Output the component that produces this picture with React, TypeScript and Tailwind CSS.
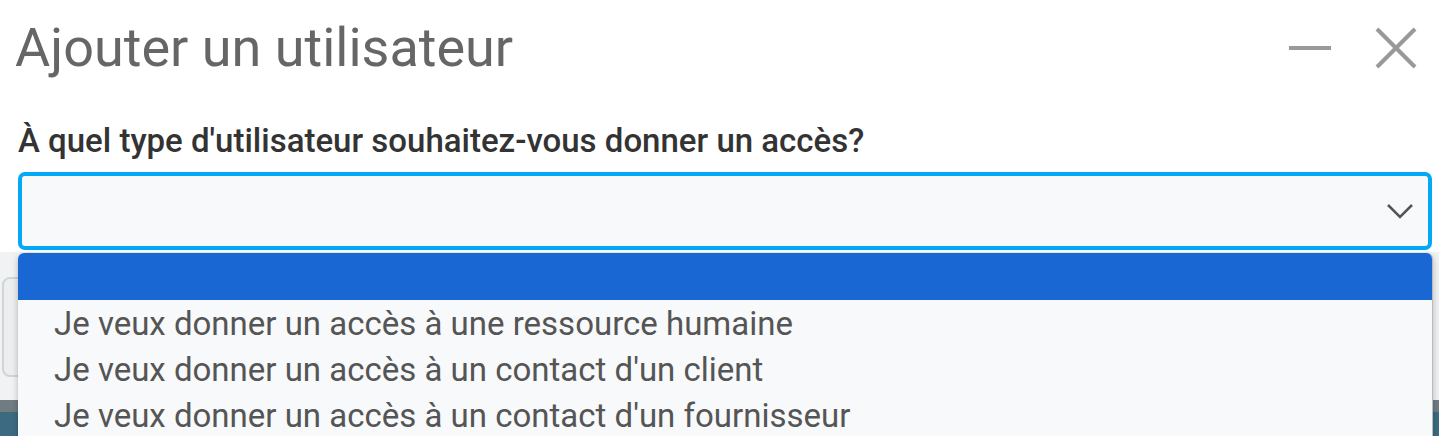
import React from 'react';

const options = [
  'Je veux donner un accès à une ressource humaine',
  "Je veux donner un accès à un contact d'un client",
  "Je veux donner un accès à un contact d'un fournisseur",
];

export default function App() {
  return (
    <div className="relative h-[436px] w-[1439px] overflow-hidden bg-white font-['Roboto',sans-serif]">
      <div className="flex h-[96px] items-center justify-between pl-[15px] pr-[22px]">
        <h1 className="text-[54px] font-normal leading-none text-[#666666]">Ajouter un utilisateur</h1>
        <div className="flex items-center gap-[44px]">
          <svg width="42" height="42" viewBox="0 0 42 42">
            <line x1="0" y1="21" x2="42" y2="21" stroke="#999999" strokeWidth="4" />
          </svg>
          <svg width="42" height="42" viewBox="0 0 42 42">
            <line x1="2" y1="2" x2="40" y2="40" stroke="#999999" strokeWidth="4" />
            <line x1="40" y1="2" x2="2" y2="40" stroke="#999999" strokeWidth="4" />
          </svg>
        </div>
      </div>

      <div className="pl-[18px] pr-[7px] pt-[26px]">
        <label className="block text-[33px] font-medium leading-[38px] text-[#333333]">
          À quel type d'utilisateur souhaitez-vous donner un accès?
        </label>
        <div className="mt-[12px] flex h-[78px] items-center justify-end rounded-[7px] border-[4px] border-[#03a9f4] bg-[#f8f9fa] pr-[15px]">
          <svg width="26" height="16" viewBox="0 0 26 16">
            <path d="M1 2 L13 14 L25 2" fill="none" stroke="#555555" strokeWidth="2.5" />
          </svg>
        </div>
      </div>

      {/* content behind the open list */}
      <div className="absolute inset-x-0 top-[252px] bottom-0 flex flex-col bg-[#f1f2f3]">
        <div className="ml-[2px] mt-[25px] h-[100px] w-[400px] rounded-[8px] border-[2px] border-[#ced6db] bg-[#eceef0]" />
        <div className="mt-[23px] h-[12px] bg-[#6f7c82]" />
        <div className="flex-1 bg-[#3c6b81]" />
      </div>

      <ul className="absolute left-[18px] top-[253px] w-[1415px] overflow-hidden rounded-t-[6px] border-r border-[#b8bcc0] bg-[#f8f9fb] shadow-[0_2px_6px_rgba(0,0,0,0.25)]">
        <li className="h-[47px] bg-[#1967d2]" />
        {options.map((o) => (
          <li key={o} className="flex h-[46px] items-center pl-[36px] text-[33px] leading-none text-[#555555]">
            {o}
          </li>
        ))}
      </ul>
    </div>
  );
}
